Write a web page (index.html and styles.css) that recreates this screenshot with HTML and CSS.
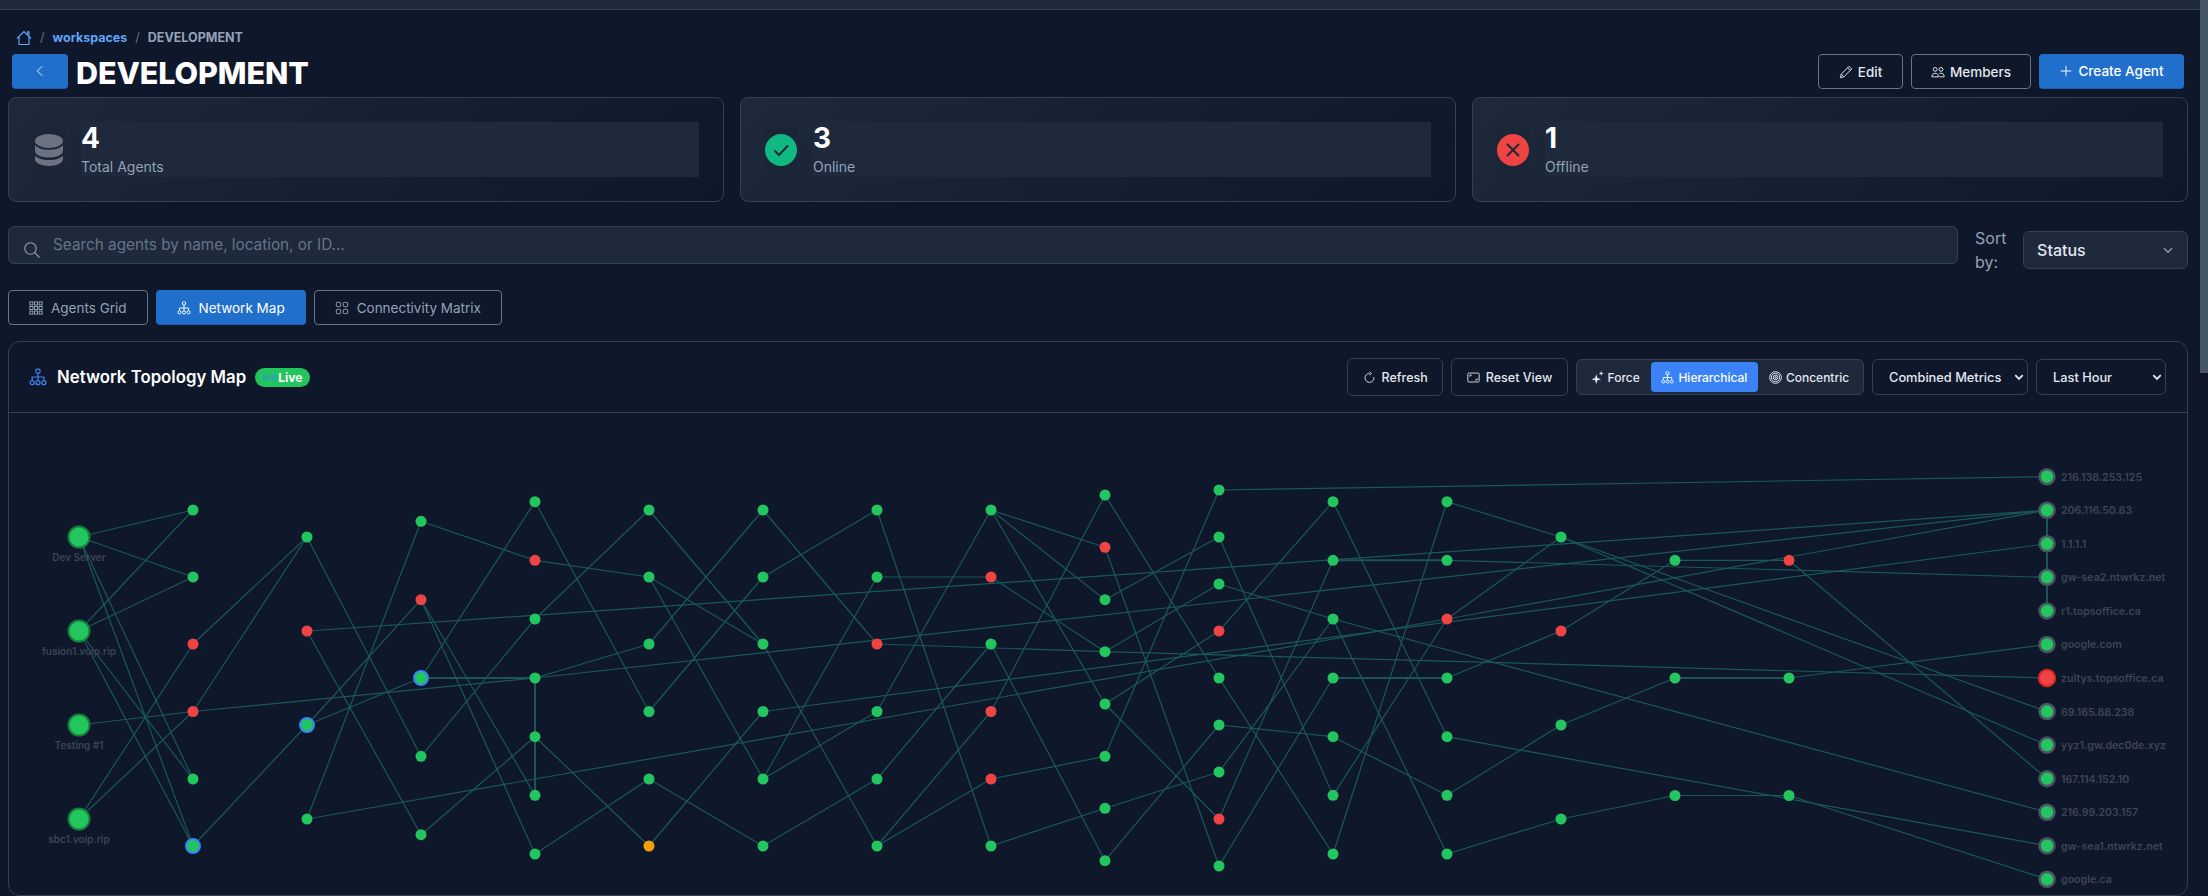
FILE: index.html
```html
<!DOCTYPE html>
<html lang="en">
<head>
<meta charset="utf-8">
<title>DEVELOPMENT</title>
<link rel="stylesheet" href="styles.css">
</head>
<body>
<div class="topbar"></div>
<div class="scrollthumb"></div>
<main class="page">
  <nav class="crumbs">
    <svg class="ic-home" viewBox="0 0 16 16"><path d="M1 8.5 8 1.5l7 7M3 7v7.5h10V7M11.5 4V1.8h1.5v3.7"/></svg>
    <span class="sep">/</span><a class="crumb-link">workspaces</a><span class="sep">/</span><span class="crumb-cur">DEVELOPMENT</span>
  </nav>
  <header class="head">
    <div class="head-left">
      <button class="btn-back"><svg viewBox="0 0 16 16" class="ic"><path d="M10.5 2.5 5 8l5.5 5.5"/></svg></button>
      <h1 class="title">DEVELOPMENT</h1>
    </div>
    <div class="head-actions">
      <button class="btn btn-outline btn-edit"><svg viewBox="0 0 16 16" class="ic"><path d="M11.5 1.5 14.5 4.5 5.5 13.5 1.5 14.5 2.5 10.5ZM9.8 3.2l3 3M2.5 10.5l3 3"/></svg>Edit</button>
      <button class="btn btn-outline btn-members"><svg viewBox="0 0 16 16" class="ic"><circle cx="4.8" cy="5" r="2.2"/><circle cx="11.4" cy="5" r="2.2"/><path d="M1 13.5c0-3 1.500-4 3.800-4s3.700 1 3.700 4ZM9.500 9.600c.5-.1 1.200-.2 1.900-.2 2.300 0 3.600 1 3.600 4.100h-5.500"/></svg>Members</button>
      <button class="btn btn-primary"><svg viewBox="0 0 16 16" class="ic"><path d="M8 2v12M2 8h12"/></svg>Create Agent</button>
    </div>
  </header>

  <section class="stats">
    <article class="stat">
      <div class="stat-icon">
        <svg class="ic-db" viewBox="0 0 28 32"><ellipse cx="14" cy="7" rx="14" ry="7"/><path d="M0 11c3 3.500 8 4.800 14 4.800S25 14.500 28 11v6c0 3.800-6.300 6.500-14 6.500S0 20.800 0 17Z"/><path d="M0 21.500c3 3.300 8 4.500 14 4.500s11-1.200 14-4.500V25c0 3.800-6.300 7-14 7S0 28.800 0 25Z"/></svg>
      </div>
      <div class="stat-body"><div class="stat-num">4</div><div class="stat-label">Total Agents</div></div>
    </article>
    <article class="stat">
      <div class="stat-icon">
        <svg class="ic-status" viewBox="0 0 32 32"><circle class="ok" cx="16" cy="16" r="16"/><path class="mark" d="M9.500 16.500l4.500 4.500 9-9.500"/></svg>
      </div>
      <div class="stat-body"><div class="stat-num">3</div><div class="stat-label">Online</div></div>
    </article>
    <article class="stat">
      <div class="stat-icon">
        <svg class="ic-status" viewBox="0 0 32 32"><circle class="bad" cx="16" cy="16" r="16"/><path class="mark" d="M10 10l12 12M22 10 10 22"/></svg>
      </div>
      <div class="stat-body"><div class="stat-num">1</div><div class="stat-label">Offline</div></div>
    </article>
  </section>

  <section class="filters">
    <div class="search">
      <svg class="ic-search" viewBox="0 0 16 16"><circle cx="6.500" cy="6.500" r="5.700"/><path d="M10.700 10.700 15.500 15.500"/></svg>
      <span class="search-ph">Search agents by name, location, or ID...</span>
    </div>
    <div class="sort-label">Sort by:</div>
    <div class="sort-select"><span>Status</span><svg viewBox="0 0 16 16" class="ic-chev"><path d="M2.500 5.500 8 11l5.500-5.500"/></svg></div>
  </section>

  <nav class="tabs">
    <button class="tab"><svg viewBox="0 0 16 16" class="ic"><rect x="1" y="1" width="3.500" height="3.500"/><rect x="6.200" y="1" width="3.500" height="3.500"/><rect x="11.500" y="1" width="3.500" height="3.500"/><rect x="1" y="6.200" width="3.500" height="3.500"/><rect x="6.200" y="6.200" width="3.500" height="3.500"/><rect x="11.500" y="6.200" width="3.500" height="3.500"/><rect x="1" y="11.500" width="3.500" height="3.500"/><rect x="6.200" y="11.500" width="3.500" height="3.500"/><rect x="11.500" y="11.500" width="3.500" height="3.500"/></svg>Agents Grid</button>
    <button class="tab tab-active"><svg viewBox="0 0 16 16" class="ic"><rect x="6.200" y="1" width="3.600" height="3.600" rx="1"/><path d="M8 4.600v3.400M2.800 11V8h10.400v3M8 8v3"/><circle cx="2.800" cy="13" r="1.800"/><circle cx="8" cy="13" r="1.800"/><circle cx="13.200" cy="13" r="1.800"/></svg>Network Map</button>
    <button class="tab"><svg viewBox="0 0 16 16" class="ic"><rect x="1.500" y="1.500" width="5" height="5" rx="1"/><rect x="9.500" y="1.500" width="5" height="5" rx="1"/><rect x="1.500" y="9.500" width="5" height="5" rx="1"/><rect x="9.500" y="9.500" width="5" height="5" rx="1"/></svg>Connectivity Matrix</button>
  </nav>

  <section class="map">
    <header class="map-head">
      <div class="map-title">
        <svg viewBox="0 0 16 16" class="ic ic-map"><rect x="6.200" y="1" width="3.600" height="3.600" rx="1"/><path d="M8 4.600v3.400M2.800 11V8h10.400v3M8 8v3"/><circle cx="2.800" cy="13" r="1.800"/><circle cx="8" cy="13" r="1.800"/><circle cx="13.200" cy="13" r="1.800"/></svg>
        <h2 class="map-name">Network Topology Map</h2>
        <span class="live"><svg viewBox="0 0 16 16" class="ic"><circle cx="8" cy="8" r="1.700"/><path d="M5 4.500a5 5 0 0 0 0 7M11 4.500a5 5 0 0 1 0 7M3 2.500a8 8 0 0 0 0 11M13 2.500a8 8 0 0 1 0 11"/></svg>Live</span>
      </div>
      <div class="map-controls">
        <button class="ctl"><svg viewBox="0 0 16 16" class="ic"><path d="M8 3a5.500 5.500 0 1 0 5.400 4.400M8 1l2.500 2L8 5"/></svg>Refresh</button>
        <button class="ctl"><svg viewBox="0 0 16 16" class="ic"><rect x="1" y="2.500" width="14" height="11" rx="1.500"/><path d="M3.500 7V5H6M12.500 9v2H10"/></svg>Reset View</button>
        <div class="layouts">
          <button class="lay"><svg viewBox="0 0 16 16" class="ic-fill"><path d="M6.500 4 8 8.500 12.500 10 8 11.500 6.500 16 5 11.500.5 10 5 8.500ZM12.500 0l.8 2.200 2.200.8-2.200.8-.8 2.200-.8-2.200L9.500 3l2.200-.8Z"/></svg>Force</button>
          <button class="lay lay-active"><svg viewBox="0 0 16 16" class="ic"><rect x="6.200" y="1" width="3.600" height="3.600" rx="1"/><path d="M8 4.600v3.400M2.800 11V8h10.400v3M8 8v3"/><circle cx="2.800" cy="13" r="1.800"/><circle cx="8" cy="13" r="1.800"/><circle cx="13.200" cy="13" r="1.800"/></svg>Hierarchical</button>
          <button class="lay"><svg viewBox="0 0 16 16" class="ic ic-bull"><circle cx="8" cy="8" r="7.200"/><circle cx="8" cy="8" r="5"/><circle cx="8" cy="8" r="2.800"/><circle cx="8" cy="8" r="1"/></svg>Concentric</button>
        </div>
        <div class="pick pick-metrics"><span>Combined Metrics</span><svg viewBox="0 0 16 16" class="ic-drop"><path d="M3 5.500 8 10.500l5-5"/></svg></div>
        <div class="pick pick-range"><span>Last Hour</span><svg viewBox="0 0 16 16" class="ic-drop"><path d="M3 5.500 8 10.500l5-5"/></svg></div>
      </div>
    </header>
    <svg id="topology" class="topology" viewBox="9 413 2178 482"></svg>
  </section>
</main>
<script src="graph.js"></script>
</body>
</html>
```

FILE: styles.css
```css
* { box-sizing: border-box; }
html, body { margin: 0; height: 896px; overflow: hidden; background: #0f172a; }
body { font-family: Inter, "Liberation Sans", sans-serif; color: #e2e8f0; position: relative; }
button { font-family: inherit; cursor: pointer; }
svg { display: block; flex: none; }

.topbar { height: 10px; width: 2200px; background: #1e293b; border-bottom: 1px solid #334155; }
.scrollthumb { position: absolute; top: 0; left: 2200px; width: 8px; height: 373px; background: #475569; }
.page { width: 2200px; padding: 0 12px 0 8px; }

.ic { width: 14px; height: 14px; fill: none; stroke: currentColor; stroke-width: 1.1; }
.ic-fill { width: 14px; height: 14px; fill: currentColor; }

.crumbs { display: flex; align-items: center; height: 20px; margin: 18px 0 6px 8px; font-size: 12.5px; line-height: 20px; }
.ic-home { width: 16px; height: 16px; fill: none; stroke: #60a5fa; stroke-width: 1.1; }
.sep { color: #64748b; margin: 0 8px; }
.crumb-link { color: #60a5fa; font-weight: 700; }
.crumb-cur { color: #94a3b8; font-weight: 700; }

.head { display: flex; justify-content: space-between; align-items: center; height: 35px; margin-bottom: 8px; padding: 0 4px; }
.head-left { display: flex; align-items: center; gap: 8px; }
.btn-back { width: 56px; height: 35px; display: flex; align-items: center; justify-content: center; background: #1f6fcb; color: #dbeafe; border: 0; border-bottom: 1px solid #1a5fb0; border-radius: 4px; padding: 0; }
.title { margin: 2px 0 0; font-size: 30.5px; line-height: 35px; font-weight: 800; color: #fff; letter-spacing: -0.1px; }
.head-actions { display: flex; gap: 8px; }
.btn { height: 35px; display: flex; align-items: center; justify-content: center; gap: 5px; padding: 0; font-size: 13.5px; font-weight: 500; color: #e2e8f0; border-radius: 4px; }
.btn-outline { background: transparent; border: 1px solid #64748b; }
.btn-edit { width: 85px; }
.btn-members { width: 120px; }
.btn-primary { width: 145px; background: #1f6fcb; border: 0; border-bottom: 1px solid #1a5fb0; color: #fff; }

.stats { display: grid; grid-template-columns: repeat(3, 1fr); gap: 16px; margin-bottom: 24px; }
.stat { height: 105px; display: flex; align-items: center; gap: 16px; padding: 24px; border: 1px solid #334155; border-radius: 8px; background: linear-gradient(135deg, #1e293b, #0f172a); }
.stat-icon { width: 32px; height: 48px; display: flex; align-items: center; justify-content: center; background: rgba(15, 23, 42, .12); }
.ic-db { width: 28px; height: 32px; fill: #6b7280; }
.ic-status { width: 32px; height: 32px; }
.ic-status .ok { fill: #10b981; }
.ic-status .bad { fill: #ef4444; }
.ic-status .mark { fill: none; stroke: #1e293b; stroke-width: 2; }
.stat-body { flex: 1; height: 55px; background: #1e293b; }
.stat-num { font-size: 28px; line-height: 32px; font-weight: 700; color: #fff; }
.stat-label { font-size: 14px; line-height: 21px; margin-top: 2px; color: #94a3b8; }

.filters { display: flex; align-items: flex-start; height: 48px; margin-bottom: 16px; }
.search { width: 1951px; height: 38px; display: flex; align-items: flex-start; gap: 13px; padding: 0 0 0 15px; background: #1e293b; border: 1px solid #334155; border-radius: 6px; }
.ic-search { width: 16px; height: 16px; margin-top: 15px; fill: none; stroke: #94a3b8; stroke-width: 1.1; }
.search-ph { font-size: 15.3px; line-height: 36px; color: #64748b; }
.sort-label { width: 48px; margin-left: 17px; font-size: 16px; line-height: 24px; color: #94a3b8; }
.sort-select { width: 165px; height: 38px; margin: 5px 0 0 auto; display: flex; align-items: center; justify-content: space-between; padding: 0 13px; background: #1e293b; border: 1px solid #334155; border-radius: 6px; font-size: 16px; font-weight: 500; color: #e2e8f0; }
.ic-chev { width: 12px; height: 12px; fill: none; stroke: #94a3b8; stroke-width: 1.8; }

.tabs { display: flex; gap: 8px; margin-bottom: 16px; }
.tab { height: 35px; display: flex; align-items: center; gap: 8px; padding: 0 20px; background: transparent; border: 1px solid #64748b; border-radius: 4px; font-size: 13.5px; color: #94a3b8; }
.tab-active { background: #1f6fcb; border-color: #1f6fcb; border-bottom-color: #1a5fb0; color: #fff; }

.map { height: 555px; border: 1px solid #334155; border-radius: 12px; overflow: hidden; }
.map-head { height: 71px; display: flex; align-items: center; justify-content: space-between; padding: 0 21px 0 20px; border-bottom: 1px solid #334155; }
.map-title { display: flex; align-items: center; }
.ic-map { width: 18px; height: 18px; color: #3b82f6; margin-right: 10px; }
.map-name { margin: 0; font-size: 16.8px; font-weight: 600; color: #fff; }
.live { display: flex; align-items: center; gap: 2px; height: 19px; margin-left: 9px; padding: 0 8px; border-radius: 10px; background: #22c55e; font-size: 12px; font-weight: 700; color: #fff; }
.live .ic { width: 13px; height: 13px; color: #3b82f6; }

.map-controls { display: flex; align-items: center; gap: 8px; }
.ctl { height: 38px; display: flex; align-items: center; gap: 6px; padding: 0 14.500px; background: transparent; border: 1px solid #334155; border-radius: 6px; font-size: 12.5px; font-weight: 500; color: #e2e8f0; }
.ctl .ic { width: 13px; height: 13px; }
.layouts { height: 36px; display: flex; align-items: center; padding: 0 3px; background: #1e293b; border: 1px solid #334155; border-radius: 6px; }
.lay { height: 30px; display: flex; align-items: center; gap: 4px; padding: 0 10.800px; background: transparent; border: 0; border-radius: 4px; font-size: 12px; font-weight: 500; color: #e2e8f0; }
.lay-active { background: #3b82f6; color: #fff; }
.lay .ic, .lay .ic-fill { width: 13px; height: 13px; }
.ic-bull { stroke-width: 1.2; }
.pick { height: 36px; display: flex; align-items: center; justify-content: space-between; padding: 0 2px 0 16px; border: 1px solid #334155; border-radius: 6px; font-size: 12.8px; font-weight: 500; color: #e2e8f0; }
.pick-metrics { width: 156px; }
.pick-range { width: 130px; }
.ic-drop { width: 12px; height: 12px; fill: none; stroke: #e2e8f0; stroke-width: 2.4; }

.topology { width: 2178px; height: 482px; }
.edge { stroke: #19595a; stroke-width: 1.2; }
.edge-thick { stroke: #1c5557; stroke-width: 2; }
.node { stroke: none; }
.n-g { fill: #22c55e; }
.n-r { fill: #ef4444; }
.n-o { fill: #f59e0b; }
.n-b { fill: #22c55e; stroke: #3b82f6; stroke-width: 2; }
.n-src { fill: #22c55e; stroke: #15803d; stroke-width: 2; }
.n-dst { fill: #22c55e; stroke: #4b5563; stroke-width: 2.500; }
.n-dst-bad { fill: #ef4444; stroke: #dc2626; stroke-width: 2; }
.node-label { font-family: Inter, "Liberation Sans", sans-serif; font-size: 10.6px; font-weight: 600; fill: #3d4554; }
.node-label-src { font-size: 10px; }
```

FILE: graph.js
```js
var Y4 = [537, 631, 725, 819];
var Y6 = [510, 577, 644, 711.5, 779, 846];
var Y7 = [501.7, 560.3, 619, 678, 736.7, 795.3, 854];
var Y8 = [495, 547.3, 599.7, 651.7, 704, 756.3, 808.3, 860.7];
var Y9 = [490, 537, 584, 631, 678, 725, 772, 819, 866];
var Y5 = [521.3, 599.7, 678, 756.3, 834.7];
var Y3 = [560.3, 678, 795.5];
var DST = [];
for (var k = 0; k < 13; k++) DST.push(476.7 + 33.55 * k);

var COLS = [
  { x: 79, ys: Y4, t: 'ssss', r: 11 },
  { x: 193, ys: Y6, t: 'ggrrgb' },
  { x: 307, ys: Y4, t: 'grbg' },
  { x: 421, ys: Y5, t: 'grbgg' },
  { x: 535, ys: Y7, t: 'grggggg' },
  { x: 649, ys: Y6, t: 'gggggo' },
  { x: 763, ys: Y6, t: 'gggggg' },
  { x: 877, ys: Y6, t: 'ggrggg' },
  { x: 991, ys: Y6, t: 'grgrrg' },
  { x: 1105, ys: Y8, t: 'grgggggg' },
  { x: 1219, ys: Y9, t: 'gggrgggrg' },
  { x: 1333, ys: Y7, t: 'ggggggg' },
  { x: 1447, ys: Y7, t: 'ggrgggg' },
  { x: 1561, ys: Y4, t: 'grgg' },
  { x: 1675, ys: Y3, t: 'ggg' },
  { x: 1789, ys: Y3, t: 'rgg' },
  { x: 2047, ys: DST, t: 'ddddddxdddddd' }
];

var SRC_LABELS = ['Dev Server', 'fusion1.voip.rip', 'Testing #1', 'sbc1.voip.rip'];
var DST_LABELS = ['216.138.253.125', '206.116.50.83', '1.1.1.1', 'gw-sea2.ntwrkz.net', 'r1.topsoffice.ca', 'google.com', 'zultys.topsoffice.ca', '69.165.88.238', 'yyz1.gw.dec0de.xyz', '167.114.152.10', '216.99.203.157', 'gw-sea1.ntwrkz.net', 'google.ca'];

var EDGES = ('0.0-1.0 0.0-1.1 0.0-1.4 0.0-1.5 0.1-1.0 0.1-1.1 0.1-1.4 0.1-1.5 0.2-1.3 0.3-1.2 0.3-1.3 ' +
  '1.2-2.0 1.3-2.0 1.5-2.2 1.3-4.3 ' +
  '2.0-3.3 2.1-3.4 2.1-16.1 2.2-3.2 2.2-3.1 2.3-3.0 2.3-12.2 12.2-16.1 ' +
  '3.0-4.1 3.1-4.5 3.1-4.6 3.2-4.0 3.3-4.2 3.4-4.4 ' +
  '4.0-5.3 4.1-5.1 4.2-5.0 4.3-5.2 4.3-16.1 4.4-5.5 4.6-5.4 ' +
  '5.0-6.2 5.1-6.2 5.1-6.4 5.2-6.0 5.3-6.1 5.4-6.5 5.5-6.3 ' +
  '6.0-7.2 6.1-7.0 6.2-7.5 6.3-16.2 6.4-7.3 6.4-7.1 6.5-7.4 ' +
  '7.0-8.5 7.1-8.1 7.2-9.3 7.3-8.0 7.4-8.2 7.5-8.3 7.5-8.4 ' +
  '8.0-9.1 8.0-9.2 8.0-9.4 8.1-9.3 8.2-9.7 8.3-9.0 8.4-9.5 8.5-9.6 ' +
  '9.0-10.4 9.1-10.8 9.2-10.1 9.3-10.2 9.3-16.6 9.4-10.3 9.4-10.7 9.5-10.0 9.6-10.6 9.7-10.5 ' +
  '10.0-16.0 10.1-11.5 10.2-11.2 10.3-11.0 10.4-11.6 10.5-11.4 10.6-11.2 10.7-11.1 10.8-11.3 ' +
  '11.0-12.4 11.2-12.6 11.2-16.10 11.4-12.5 11.5-12.2 11.6-12.0 ' +
  '12.0-13.0 12.1-16.3 12.2-13.0 12.3-13.1 12.4-16.11 12.5-13.2 12.6-13.3 ' +
  '13.0-16.7 13.0-16.8 13.1-14.0 13.2-14.1 13.3-14.2 ' +
  '14.0-15.0 14.2-15.2 ' +
  '15.0-16.9 15.1-16.5 15.2-16.12').split(' ');

var THICK = '3.2-4.3 4.3-4.5 11.1-12.1 11.3-12.3 14.1-15.1 16.1-16.2 16.2-16.3 16.3-16.4'.split(' ');

var NS = 'http://www.w3.org/2000/svg';
var svg = document.getElementById('topology');

function el(name, attrs, text) {
  var e = document.createElementNS(NS, name);
  for (var a in attrs) e.setAttribute(a, attrs[a]);
  if (text) e.textContent = text;
  svg.appendChild(e);
  return e;
}

function pt(ref) {
  var p = ref.split('.');
  var c = COLS[+p[0]];
  return [c.x, c.ys[+p[1]]];
}

function line(spec, cls) {
  var s = spec.split('-');
  var a = pt(s[0]);
  var b = pt(s[1]);
  el('line', { x1: a[0], y1: a[1], x2: b[0], y2: b[1], 'class': cls });
}

EDGES.forEach(function (e) { line(e, 'edge'); });
THICK.forEach(function (e) { line(e, 'edge edge-thick'); });

var STYLE = {
  s: ['n-src', 10.5], g: ['n-g', 5.5], r: ['n-r', 5.5], o: ['n-o', 5.5], b: ['n-b', 7],
  d: ['n-dst', 7.5], x: ['n-dst-bad', 8.2]
};

COLS.forEach(function (c) {
  c.ys.forEach(function (y, i) {
    var st = STYLE[c.t.charAt(i)];
    el('circle', { cx: c.x, cy: y, r: st[1], 'class': 'node ' + st[0] });
  });
});

Y4.forEach(function (y, i) {
  el('text', { x: 79, y: y + 24, 'text-anchor': 'middle', 'class': 'node-label node-label-src' }, SRC_LABELS[i]);
});
DST.forEach(function (y, i) {
  el('text', { x: 2061, y: y + 4, 'class': 'node-label' }, DST_LABELS[i]);
});
```
